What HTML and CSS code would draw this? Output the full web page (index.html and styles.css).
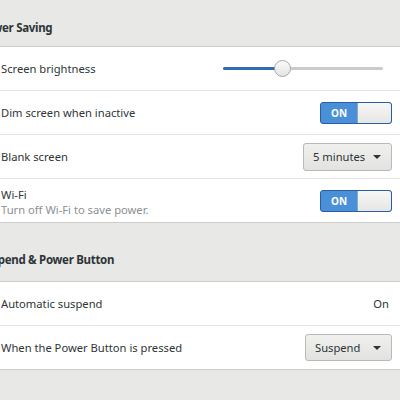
FILE: index.html
```html
<!DOCTYPE html>
<html>
<head>
<meta charset="utf-8">
<link rel="stylesheet" href="styles.css">
</head>
<body>
<div class="page">
  <div class="section-title">Power Saving</div>
  <div class="list">
    <div class="row">
      <span class="label">Screen brightness</span>
      <div class="slider">
        <div class="track"><div class="fill"></div></div>
        <div class="knob"></div>
      </div>
    </div>
    <div class="row">
      <span class="label">Dim screen when inactive</span>
      <div class="switch"><span class="on">ON</span><span class="thumb"></span></div>
    </div>
    <div class="row">
      <span class="label">Blank screen</span>
      <div class="combo combo-wide"><span>5 minutes</span><span class="arrow"></span></div>
    </div>
    <div class="row">
      <div class="twoline">
        <span class="label">Wi-Fi</span>
        <span class="sub">Turn off Wi-Fi to save power.</span>
      </div>
      <div class="switch"><span class="on">ON</span><span class="thumb"></span></div>
    </div>
  </div>
  <div class="section-title second">Suspend &amp; Power Button</div>
  <div class="list">
    <div class="row">
      <span class="label">Automatic suspend</span>
      <span class="value">On</span>
    </div>
    <div class="row">
      <span class="label">When the Power Button is pressed</span>
      <div class="combo combo-narrow"><span>Suspend</span><span class="arrow"></span></div>
    </div>
  </div>
</div>
</body>
</html>
```

FILE: styles.css
```css
html, body {
  margin: 0;
  padding: 0;
  background: #e8e8e7;
  overflow: hidden;
}
body {
  width: 400px;
  height: 400px;
  font-family: "Noto Sans", "Open Sans", sans-serif;
  font-size: 11.2px;
  color: #2e3436;
}
.page {
  width: 417px;
  margin-left: -12px;
  padding-top: 18px;
}
.section-title {
  font-weight: bold;
  font-size: 11.5px;
  letter-spacing: -0.3px;
  line-height: 20px;
  height: 20px;
  margin-left: -9px;
  margin-bottom: 8px;
}
.section-title.second {
  margin-top: 27px;
  margin-bottom: 11px;
}
.list {
  background: #ffffff;
  border: 1px solid #cdcdca;
}
.row {
  display: flex;
  align-items: center;
  justify-content: space-between;
  height: 43px;
  padding: 0 12px;
  border-bottom: 1px solid #e5e5e3;
}
.row:last-child {
  border-bottom: none;
}
.label {
  line-height: 16px;
}
.twoline {
  display: flex;
  flex-direction: column;
  padding-top: 3px;
}
.twoline .label {
  line-height: 15px;
}
.sub {
  color: #8d9091;
  line-height: 15px;
}
.value {
  margin-right: 3px;
}
.slider {
  position: relative;
  width: 160px;
  height: 17px;
  margin-right: 9px;
  display: flex;
  align-items: center;
}
.track {
  width: 100%;
  height: 3px;
  background: #cbcbc8;
  border-radius: 2px;
  overflow: hidden;
}
.fill {
  width: 58px;
  height: 100%;
  background: #2f6db6;
}
.knob {
  position: absolute;
  left: 51px;
  top: 0;
  width: 15px;
  height: 15px;
  border-radius: 50%;
  border: 1px solid #a9aaa7;
  background: linear-gradient(#fbfbfb, #e3e3e1);
}
.switch {
  display: flex;
  width: 70px;
  height: 20px;
  border: 1px solid #2a5e9e;
  border-radius: 3px;
  background: #4a90d9;
  overflow: hidden;
}
.switch .on {
  width: 36px;
  color: #ffffff;
  font-size: 10px;
  font-weight: bold;
  line-height: 20px;
  text-align: center;
}
.switch .thumb {
  flex: 1;
  background: linear-gradient(#f7f7f7, #e6e6e4);
  border-left: 1px solid #8fa6c2;
  border-radius: 0 2px 2px 0;
}
.combo {
  display: flex;
  align-items: center;
  justify-content: space-between;
  box-sizing: border-box;
  height: 28px;
  padding: 0 10px 0 9px;
  border: 1px solid #b9b9b6;
  border-radius: 3px;
  background: linear-gradient(#f0f0ef, #e2e2e0);
  color: #2e3436;
}
.combo-wide {
  width: 89px;
}
.combo-narrow {
  width: 87px;
  height: 27px;
}
.arrow {
  width: 0;
  height: 0;
  border-left: 4px solid transparent;
  border-right: 4px solid transparent;
  border-top: 4px solid #2e3436;
}
```
